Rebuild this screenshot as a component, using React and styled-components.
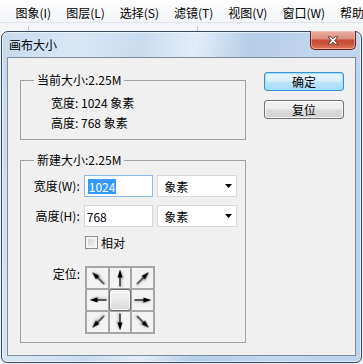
import React from 'react';
import styled, { createGlobalStyle } from 'styled-components';

const GlobalStyle = createGlobalStyle`
  html, body { margin: 0; padding: 0; }
  body {
    width: 363px;
    height: 364px;
    overflow: hidden;
    background: #f0f1f3;
    font-family: "Noto Sans CJK SC", "Microsoft YaHei", sans-serif;
    font-size: 12px;
    color: #000;
  }
  * { box-sizing: border-box; }
`;

const Page = styled.div`
  display: flex;
  flex-direction: column;
  width: 363px;
  height: 364px;
  overflow: hidden;
`;

const MenuBar = styled.div`
  display: flex;
  height: 22px;
  padding: 4px 0 0 8px;
  overflow: hidden;
  background: linear-gradient(#fdfdfe, #f3f5f8);
`;

const MenuItem = styled.div`
  flex-shrink: 0;
  padding: 0 7.5px;
  line-height: 18px;
  white-space: nowrap;
`;

const Strip = styled.div`
  display: flex;
  height: 9px;
  gap: 168px;
  padding: 3px 0 0 28px;
  border-top: 1px solid #e2e6eb;
  background: #f4f5f7;
`;

const Separator = styled.div`
  width: 1px;
  height: 6px;
  background: #c4c8cd;
`;

const Window = styled.div`
  width: 361px;
  margin-left: 1px;
  padding: 0 5px 6px;
  border: 1px solid #354a60;
  border-radius: 7px 7px 6px 6px;
  background: linear-gradient(100deg, #c6d9ed 0%, #d9e7f5 18%, #c9dcef 34%, #e3edf8 47%, #b5cde7 60%, #c3d7ed 78%, #bcd2ea 100%);
  box-shadow: inset 0 0 0 1px rgba(255, 255, 255, 0.55);
`;

const TitleBar = styled.div`
  display: flex;
  align-items: center;
  height: 25px;
  padding-left: 2px;
`;

const Title = styled.span`
  line-height: 16px;
`;

const CloseButton = styled.div`
  display: flex;
  align-items: center;
  justify-content: center;
  align-self: flex-start;
  width: 46px;
  height: 19px;
  margin: -1px 0 0 auto;
  border: 1px solid #5e2720;
  border-top: none;
  border-radius: 0 0 5px 5px;
  background: linear-gradient(#eab0a3 0%, #dc8f7f 42%, #c74a36 52%, #c9543c 70%, #e07b5c 100%);
  box-shadow: inset 0 0 0 1px rgba(255, 220, 210, 0.45);
`;

const Client = styled.div`
  display: flex;
  justify-content: space-between;
  height: 299px;
  padding: 14px 11px 0 12px;
  border: 1px solid #7e8c99;
  background: #f0f0f0;
`;

const LeftColumn = styled.div`
  display: flex;
  flex-direction: column;
  width: 226px;
`;

const Group = styled.fieldset`
  margin: ${p => p.$top || 0}px 0 0;
  min-width: 0;
  padding: ${p => p.$pad};
  border: 1px solid #a0a0a0;
`;

const Legend = styled.legend`
  margin-left: 5px;
  padding: 0 3px;
  line-height: 14px;
`;

const InfoLine = styled.div`
  margin-left: 22px;
  line-height: 20px;
  white-space: pre;
`;

const FormRow = styled.div`
  display: flex;
  align-items: ${p => p.$align || 'center'};
  gap: 4px;
  margin-top: ${p => p.$top || 0}px;
`;

const FieldLabel = styled.span`
  width: 51px;
  text-align: right;
  white-space: nowrap;
  line-height: 14px;
  margin-top: ${p => p.$top || 0}px;
`;

const TextField = styled.div`
  display: flex;
  align-items: center;
  width: 70px;
  height: 22px;
  padding-left: ${p => (p.$focused ? 3 : 2)}px;
  border: 1px solid ${p => (p.$focused ? '#8cbbe8' : '#d3d6da')};
  background: #fff;
  line-height: 15px;
`;

const Selected = styled.span`
  padding: 0 1px;
  background: #3399ff;
  color: #fff;
`;

const ComboBox = styled.div`
  display: flex;
  align-items: center;
  justify-content: space-between;
  width: 80px;
  height: 22px;
  padding: 0 4px 0 6px;
  border: 1px solid #d7d9dc;
  background: #fff;
`;

const CheckRow = styled.label`
  display: flex;
  align-items: center;
  gap: 3px;
  margin: 9px 0 0 56px;
  line-height: 13px;
`;

const CheckBox = styled.span`
  width: 13px;
  height: 13px;
  border: 1px solid #8e8f8f;
  background: linear-gradient(135deg, #c5c9cf 0%, #e6e8ea 55%, #f6f6f6 100%);
  box-shadow: inset 0 0 0 2px #f4f4f4;
`;

const AnchorGrid = styled.div`
  display: grid;
  grid-template-columns: 21px 20px 21px;
  grid-template-rows: repeat(3, 20px);
  gap: 2px;
  padding: 2px;
  margin-left: 1px;
  background: #a6a6a6;
`;

const AnchorCell = styled.div`
  display: flex;
  align-items: center;
  justify-content: center;
  background: #f3f3f3;
`;

const CenterKnob = styled.div`
  margin: -1px;
  border: 1px solid #6d6d6d;
  border-radius: 3px;
  background: linear-gradient(#f6f6f6, #d8d8d8);
  box-shadow: inset 0 0 0 1px rgba(255, 255, 255, 0.8);
`;

const ArrowSvg = styled.svg`
  width: 20px;
  height: 20px;
  transform: rotate(${p => p.$deg}deg);
  filter: drop-shadow(1px 1px 1px rgba(0, 0, 0, 0.35));
`;

const ButtonColumn = styled.div`
  display: flex;
  flex-direction: column;
  gap: 9px;
`;

const Button = styled.button`
  width: 80px;
  height: 19px;
  padding: 0;
  font: inherit;
  line-height: 16px;
  color: #000;
  border: 1px solid ${p => (p.$primary ? '#3d8fd8' : '#707070')};
  border-radius: 3px;
  background: ${p =>
    p.$primary
      ? 'linear-gradient(#e8f6fd, #d7effc 48%, #bde5fb 52%, #a9dcf6)'
      : 'linear-gradient(#f3f3f3, #ebebeb 48%, #dddddd 52%, #cfcfcf)'};
  box-shadow: inset 0 0 0 1px ${p => (p.$primary ? '#9fe0fb' : 'rgba(255,255,255,0.75)')};
`;

const Arrow = ({ deg }) => (
  <ArrowSvg viewBox="0 0 20 20" $deg={deg}>
    <line x1="10" y1="18.5" x2="10" y2="7" stroke="#000" strokeWidth="1.2" />
    <polygon points="10,1.5 7.5,9.5 12.5,9.5" fill="#000" />
  </ArrowSvg>
);

const menus = ['图象(I)', '图层(L)', '选择(S)', '滤镜(T)', '视图(V)', '窗口(W)', '帮助(H)'];
const anchors = [-45, 0, 45, -90, null, 90, -135, 180, 135];

const DropArrow = () => (
  <svg width="7" height="4" viewBox="0 0 7 4">
    <polygon points="0,0 7,0 3.5,4" fill="#000" />
  </svg>
);

export default function App() {
  return (
    <Page>
      <GlobalStyle />
      <MenuBar>
        {menus.map(m => (
          <MenuItem key={m}>{m}</MenuItem>
        ))}
      </MenuBar>
      <Strip>
        <Separator />
        <Separator />
      </Strip>
      <Window>
        <TitleBar>
          <Title>画布大小</Title>
          <CloseButton>
            <svg width="12" height="9" viewBox="0 0 12 9">
              <path
                d="M1 0.8 L4.2 0.8 L6 2.9 L7.8 0.8 L11 0.8 L7.7 4.5 L11 8.2 L7.8 8.2 L6 6.1 L4.2 8.2 L1 8.2 L4.3 4.5 Z"
                fill="#fff"
                stroke="#4a1d18"
                strokeWidth="0.8"
                strokeLinejoin="round"
              />
            </svg>
          </CloseButton>
        </TitleBar>
        <Client>
          <LeftColumn>
            <Group $top={1} $pad="6px 8px 6px">
              <Legend>当前大小:2.25M</Legend>
              <InfoLine>宽度: 1024 象素</InfoLine>
              <InfoLine>高度: 768 象素</InfoLine>
            </Group>
            <Group $top={13} $pad="8px 8px 8px">
              <Legend>新建大小:2.25M</Legend>
              <FormRow>
                <FieldLabel>宽度(W):</FieldLabel>
                <TextField $focused>
                  <Selected>1024</Selected>
                </TextField>
                <ComboBox>
                  象素
                  <DropArrow />
                </ComboBox>
              </FormRow>
              <FormRow $top={8}>
                <FieldLabel>高度(H):</FieldLabel>
                <TextField>768</TextField>
                <ComboBox>
                  象素
                  <DropArrow />
                </ComboBox>
              </FormRow>
              <CheckRow>
                <CheckBox />
                相对
              </CheckRow>
              <FormRow $top={17} $align="flex-start">
                <FieldLabel $top={1}>定位:</FieldLabel>
                <AnchorGrid>
                  {anchors.map((deg, i) => (
                    <AnchorCell key={i} as={deg === null ? CenterKnob : AnchorCell}>
                      {deg !== null && <Arrow deg={deg} />}
                    </AnchorCell>
                  ))}
                </AnchorGrid>
              </FormRow>
            </Group>
          </LeftColumn>
          <ButtonColumn>
            <Button $primary>确定</Button>
            <Button>复位</Button>
          </ButtonColumn>
        </Client>
      </Window>
    </Page>
  );
}
